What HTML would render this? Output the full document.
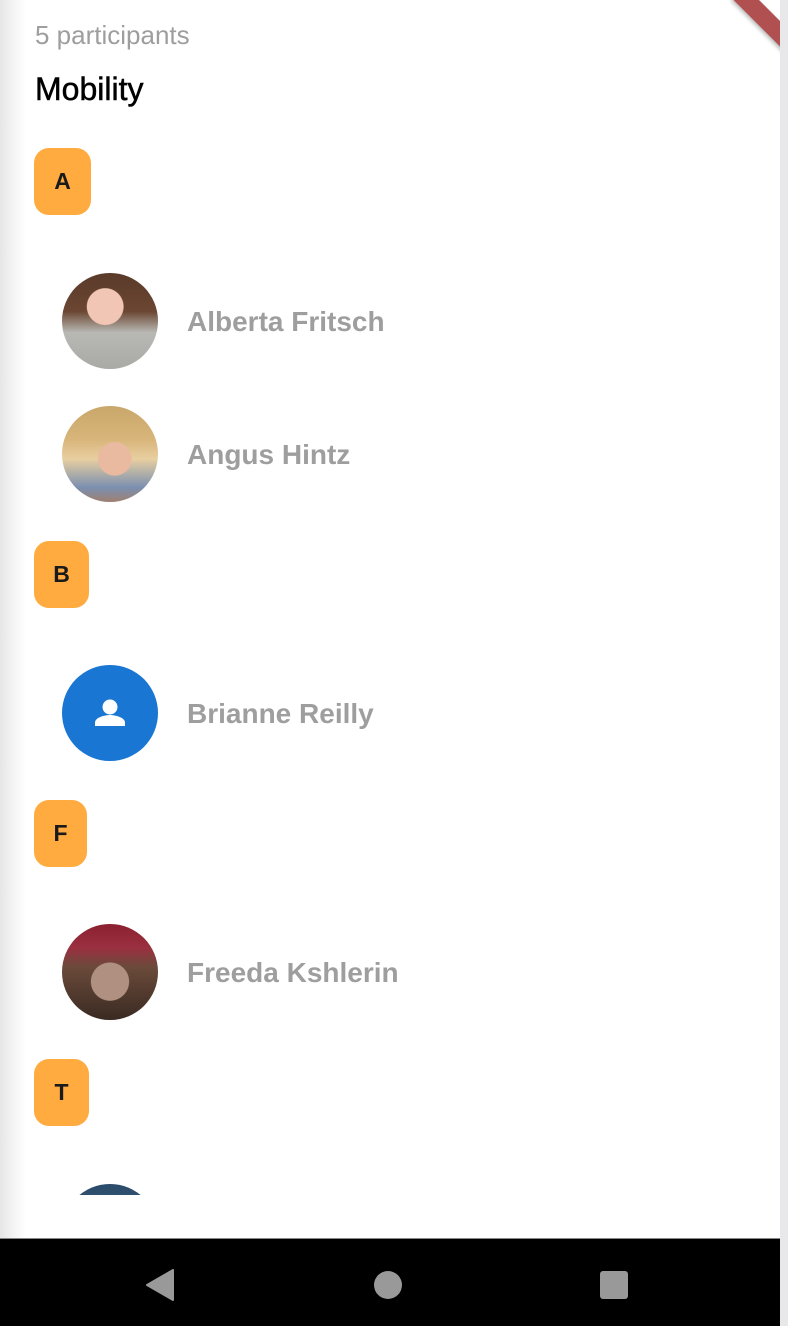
<!DOCTYPE html>
<html><head><meta charset="utf-8"><style>
*{margin:0;padding:0;box-sizing:border-box}
html,body{width:788px;height:1326px;overflow:hidden;background:#fff;font-family:"Liberation Sans",Roboto,sans-serif}
.left{position:absolute;left:0;top:0;width:26px;height:1238px;background:linear-gradient(90deg,#e6e6e6,#f6f6f6 60%,#fff)}
.right{position:absolute;left:780px;top:0;width:8px;height:1326px;background:#e8e8ea}
.nav{position:absolute;left:0;top:1238px;width:780px;height:88px;background:#000;border-top:1px solid #888}
.t{position:absolute;white-space:nowrap}
.badge{position:absolute;left:34px;height:67px;background:#ffab40;border-radius:15px;font-weight:bold;font-size:23px;color:#1a1a1a;display:flex;align-items:center;justify-content:center}
.av{position:absolute;left:62px;width:96px;height:96px;border-radius:50%;overflow:hidden}
.name{position:absolute;left:187px;font-size:28px;font-weight:bold;color:#9e9e9e;white-space:nowrap}
.ribbon{position:absolute;left:745px;top:-14px;width:80px;height:18px;background:#b05050;transform:rotate(45deg);transform-origin:0 0;box-shadow:0 2px 4px rgba(0,0,0,.3)}
</style></head><body>
<div class="left"></div>
<div class="t" style="left:35px;top:20px;font-size:26px;color:#9e9e9e">5 participants</div>
<div class="t" style="left:35px;top:71px;font-size:32px;color:#000;-webkit-text-stroke:0.5px #000">Mobility</div>

<div class="badge" style="top:148px;width:57px">A</div>
<div class="av" style="top:273px;background:radial-gradient(circle at 45% 35%,#f2c6b4 0 22%,transparent 23%),linear-gradient(180deg,#5a3a2a 0,#6b4632 40%,#b8b8b4 62%,#a9aaa6 100%)"></div>
<div class="name" style="top:306px">Alberta Fritsch</div>

<div class="av" style="top:406px;background:radial-gradient(circle at 55% 55%,#e9b9a0 0 22%,transparent 23%),linear-gradient(180deg,#c9a76a 0,#d8b57a 35%,#e8cfa0 55%,#7a8fb0 85%,#a08070 100%)"></div>
<div class="name" style="top:439px">Angus Hintz</div>

<div class="badge" style="top:541px;width:55px">B</div>
<div class="av" style="top:665px;background:#1976d2">
<svg width="96" height="96" viewBox="0 0 96 96"><circle cx="48" cy="42" r="7.5" fill="#fff"/><path d="M33 61v-3.5c0-5 10-7.5 15-7.5s15 2.5 15 7.5V61z" fill="#fff"/></svg></div>
<div class="name" style="top:698px">Brianne Reilly</div>

<div class="badge" style="top:800px;width:53px">F</div>
<div class="av" style="top:924px;background:radial-gradient(circle at 50% 60%,#b09080 0 25%,transparent 26%),linear-gradient(180deg,#8a2030 0,#9a3040 25%,#6a4a3a 45%,#3a2a22 100%)"></div>
<div class="name" style="top:957px">Freeda Kshlerin</div>

<div class="badge" style="top:1059px;width:55px">T</div>
<div style="position:absolute;left:62px;top:1184px;width:96px;height:11px;overflow:hidden"><div style="width:96px;height:96px;border-radius:50%;background:linear-gradient(180deg,#2a4a6a,#5a7a9a)"></div></div>

<div class="ribbon"></div>
<div class="right"></div>
<div class="nav">
<svg style="position:absolute;left:145px;top:30px" width="30" height="32" viewBox="0 0 30 32"><path d="M28 1v30L2 16z" fill="#999" stroke="#999" stroke-linejoin="round" stroke-width="2"/></svg>
<div style="position:absolute;left:374px;top:32px;width:28px;height:28px;border-radius:50%;background:#999"></div>
<div style="position:absolute;left:600px;top:32px;width:28px;height:28px;border-radius:3px;background:#999"></div>
</div>
</body></html>
